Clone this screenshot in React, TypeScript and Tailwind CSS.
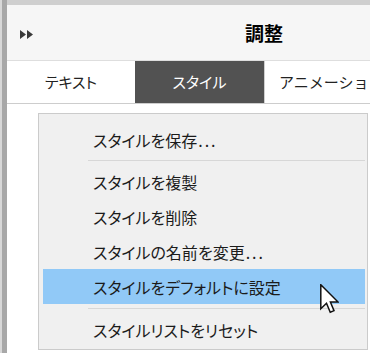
import React from "react";

const Sep = ({ h, top }: { h: string; top: string }) => (
  <div className={`${h} relative`}>
    <div className={`absolute left-[45px] right-0 ${top} h-px bg-[#d7d7d7]`} />
  </div>
);

const Item = ({ label, dots, active }: { label: string; dots?: boolean; active?: boolean }) => (
  <div
    className={`h-[35px] flex items-center pl-[50px] text-[16px] text-[#1b1b1b] whitespace-nowrap [font-feature-settings:'palt'] ${
      active ? "bg-[#91c9f7]" : ""
    }`}
  >
    {label}
    {dots && <span className="ml-[1px] tracking-[2px]">...</span>}
  </div>
);

export default function App() {
  return (
    <div className="w-[370px] h-[353px] overflow-hidden flex bg-white relative font-['Noto_Sans_CJK_JP',sans-serif]">
      <div className="w-[2px] bg-[#d8d8d8]" />
      <div className="w-[5px] bg-[#a8a8a8]" />
      <div className="flex-1 flex flex-col min-w-0">
        <div className="h-[5px] bg-[#cfcfcf]" />
        <div className="h-[56px] bg-[#f6f6f6] border-b border-[#dedede] flex items-center">
          <svg className="ml-[13px] mt-[3px]" width="15" height="9" viewBox="0 0 15 9">
            <path d="M0 0 L6 4.5 L0 9 Z M7 0 L13 4.5 L7 9 Z" fill="#3a3a3a" />
          </svg>
          <span className="ml-[210px] text-[19px] font-bold text-black leading-none">調整</span>
        </div>
        <div className="h-[43px] flex border-b border-[#cdcdcd] text-[15px] whitespace-nowrap">
          <div className="w-[128px] flex items-center justify-center text-[#222] [font-feature-settings:'palt']">
            テキスト
          </div>
          <div className="w-[129px] flex items-center justify-center bg-[#525252] text-white [font-feature-settings:'palt']">
            スタイル
          </div>
          <div className="flex-1 flex items-center pl-[14px] border-l border-[#cfcfcf] text-[#222] overflow-hidden">
            アニメーション
          </div>
        </div>
        <div className="flex-1 bg-white" />
      </div>

      <div className="absolute left-[38px] top-[113px] w-[330px] border border-[#cbcbcb] bg-[#f0f0f0] pt-[8px] pb-[2px] pl-[4px] pr-[2px]">
        <Item label="スタイルを保存" dots />
        <Sep h="h-[7px]" top="top-[3px]" />
        <Item label="スタイルを複製" />
        <Item label="スタイルを削除" />
        <Item label="スタイルの名前を変更" dots />
        <Item label="スタイルをデフォルトに設定" active />
        <Sep h="h-[8px]" top="top-[4px]" />
        <Item label="スタイルリストをリセット" />
      </div>

      <svg className="absolute left-[320px] top-[284px]" width="19" height="30" viewBox="0 0 12.6 20">
        <path
          d="M0.5 0.5 L0.5 16.5 L4.3 12.8 L6.8 18.8 L9.3 17.8 L6.9 12 L12 12 Z"
          fill="white"
          stroke="#111"
          strokeWidth="1"
          strokeLinejoin="miter"
        />
      </svg>
    </div>
  );
}
